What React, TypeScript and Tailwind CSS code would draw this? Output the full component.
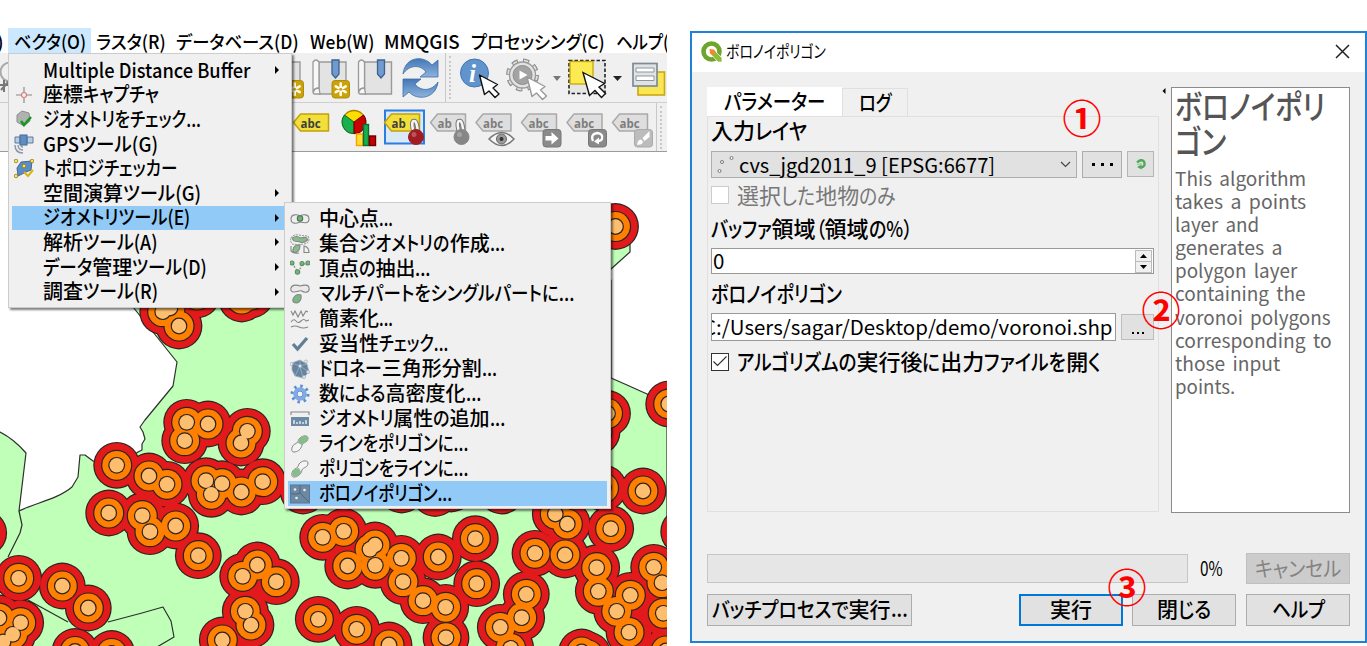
import { useLayoutEffect, useRef, type ReactNode } from "react";

const FONT = "font-['Noto_Sans_CJK_JP',sans-serif]";

/* Text set to a given width: kanji keep their full width, the rest is condensed. */
function Fit({ text, w, className = "" }: { text: string; w: number; className?: string }) {
  const ref = useRef<HTMLSpanElement>(null);
  const runs = text.match(/[\u4e00-\u9fff]+|[^\u4e00-\u9fff]+/g) ?? [];
  useLayoutEffect(() => {
    const host = ref.current;
    if (!host) return;
    const parts = Array.from(host.children) as HTMLElement[];
    const sizes = parts.map((p) => (p.firstElementChild as HTMLElement).offsetWidth);
    let fixed = 0;
    let loose = 0;
    parts.forEach((p, i) => {
      if (p.dataset.kanji === "1") fixed += sizes[i];
      else loose += sizes[i];
    });
    const s = loose > 0 ? (w - fixed) / loose : 1;
    parts.forEach((p, i) => {
      if (p.dataset.kanji === "1") return;
      p.style.width = `${sizes[i] * s}px`;
      (p.firstElementChild as HTMLElement).style.transform = `scaleX(${s})`;
    });
  }, [text, w]);
  return (
    <span ref={ref} className={`inline-flex shrink-0 whitespace-pre ${className}`}>
      {runs.map((r, i) => (
        <span key={i} data-kanji={/[\u4e00-\u9fff]/.test(r) ? "1" : "0"} className="inline-block">
          <span className="inline-block origin-left">{r}</span>
        </span>
      ))}
    </span>
  );
}

/* ---------- map ---------- */

const POINTS: [number, number][] = [
  [116.7, 465.3], [149, 476], [167, 484.3], [186.7, 422.3], [208, 424], [184.7, 440.7], [247.3, 431.3],
  [241, 443], [206, 480.7], [222, 483.7], [211.3, 494.3], [241.3, 492], [262.7, 481.7], [108.7, 513],
  [142.3, 515.7], [150, 531.7], [175.7, 526], [198.3, 555.7], [18.7, 578.3], [62.3, 586], [88.3, 608],
  [257.3, 565], [242.7, 576.3], [276.3, 581.7], [245.3, 611.3], [251, 625], [222.3, 640], [20.7, 622.7],
  [-1, 618], [12.7, 634.3], [3, 642], [75, 651.5], [111.7, 653.5], [-16.3, 533], [322.7, 537.3],
  [343.7, 531.3], [375, 545], [370, 549.3], [347.7, 566], [375.3, 565.3], [401.3, 558.3], [403, 581.7],
  [423, 600.7], [445.7, 607.3], [438.3, 557], [475.3, 538.7], [476.7, 583.7], [446, 637.7], [318.3, 619.3],
  [356.7, 629.3], [389, 645], [555.3, 514], [567.3, 524], [610.7, 528.7], [643, 491], [535, 553.3],
  [565, 555], [596.7, 567.7], [598.3, 591.3], [616.7, 611.3], [630.3, 595.3], [629, 632.3], [653.7, 567.3],
  [662, 582.7], [663.3, 613.3], [526.3, 594.3], [521.7, 617.7], [500.3, 627.3], [510.7, 648.3],
  [581.7, 652], [683.7, 531.7], [303, 491], [401.7, 490], [435, 493.5], [451, 489], [501.7, 491],
  [615.5, 226.5], [607.5, 413.5], [597, 432], [668.7, 404], [603.5, 488], [179, 326], [162.7, 311.7],
  [170, 308], [197, 295], [241.7, 299], [251, 295], [666, 651], [588, 655],
];

function Rings({ r, fill }: { r: number; fill: string }) {
  return (
    <>
      {POINTS.map(([x, y], i) => (
        <circle key={`o${i}`} cx={x} cy={y} r={r + 0.6} fill="#2b2320" />
      ))}
      {POINTS.map(([x, y], i) => (
        <circle key={`f${i}`} cx={x} cy={y} r={r - 0.6} fill={fill} />
      ))}
    </>
  );
}

function MapCanvas() {
  return (
    <svg width="667" height="494" viewBox="0 152 667 494" className="block shrink-0 bg-white">
      <g fill="#bfffb7" stroke="#2e2e2e" strokeWidth="1.2" strokeLinejoin="round">
        <path d="M0 432C10 437 20 446 26 453L19 511C35 503 58 499 72 487L78 477L80 455L85 455L93 461L116 468L138 452L142 450L142 444L145 439L143 432L140 427L145 420L173 386L177 362L133 307L133 280H611V378L627 385L647 394L667 404V680H-5V432Z" />
        <path d="M605 232L630 243V252L611 269L600 275Z" />
        <path fill="none" d="M19 511L22 525L20 533L8 557M28 600L68 622M108 622L142 613L163 607L171 621L174 637L157 647" />
      </g>
      <Rings r={22.8} fill="#e31a1c" />
      <Rings r={15} fill="#ff7f00" />
      <Rings r={7.8} fill="#fdbf6f" />
    </svg>
  );
}

/* ---------- toolbars ---------- */

/* One toolbar slot; its drawing uses window coordinates starting at (x, y). */
function Slot({ x, y, w, children }: { x: number; y: number; w: number; children?: ReactNode }) {
  return (
    <svg width={w} height="48" viewBox={`${x} ${y} ${w} 48`} className="block shrink-0">
      {children}
    </svg>
  );
}

function Book({ x, star, ribbon }: { x: number; star?: boolean; ribbon?: boolean }) {
  return (
    <g>
      <path d={`M${x + 7} 62H${x + 34}V94H${x + 7}Z`} fill="#e3e3e3" stroke="#9a9a9a" strokeWidth="1.4" />
      <path d={`M${x + 1} 62q3-4 6 0V88q-4-1-6 5ZM${x + 1} 92q1-4 6-4l1 6H${x + 3}q-2 0-2-2Z`} fill="#f7f7f7" stroke="#9a9a9a" strokeWidth="1.3" />
      {ribbon && <path d={`M${x + 20} 60h7v14l-3.500 4l-3.500-4Z`} fill="#6f9bcf" stroke="#3c628f" strokeWidth="1.3" />}
      {star && (
        <g>
          <rect x={x + 20} y="80.500" width="17.500" height="17.500" rx="3" fill="#c9a20d" stroke="#b28d00" />
          <g stroke="#fffbe8" strokeWidth="2.600" strokeLinecap="round">
            <path d={`M${x + 28.7} 83.500v11.500M${x + 23.700} 86.400l10 5.700M${x + 33.700} 86.400l-10 5.700`} />
          </g>
          <circle cx={x + 28.7} cy="89.200" r="1.500" fill="#c9a20d" />
        </g>
      )}
    </g>
  );
}

function Pointer({ x, y, faint }: { x: number; y: number; faint?: boolean }) {
  return (
    <path
      transform={`translate(${x} ${y})`}
      d="M0 0L5 19.500L9.500 16L15.500 22.500L19.500 19L13.500 13L18 9.500Z"
      fill="#fff"
      stroke={faint ? "#999" : "#111"}
      strokeWidth="1.400"
      strokeLinejoin="round"
    />
  );
}

function Tag({ x, y = 113, text = "abc", gold }: { x: number; y?: number; text?: string; gold?: boolean }) {
  return (
    <g>
      <path
        d={`M${x} ${y + 9.500}L${x + 7} ${y + 1}H${x + 35}V${y + 18}H${x + 7}Z`}
        fill={gold ? "#f3df3a" : "#dedede"}
        stroke={gold ? "#c3a00f" : "#a9a9a9"}
        strokeWidth="1.500"
        strokeLinejoin="round"
      />
      <text x={x + 7} y={y + 14.500} fontSize="11.500" fontWeight="700" fontFamily="Open Sans" fill={gold ? "#3f3f3f" : "#7d7d7d"}>
        {text}
      </text>
    </g>
  );
}

function Pin({ x, fill }: { x: number; fill: string }) {
  return (
    <g>
      <path d={`M${x - 3} 130q-2-9 1-9q3-1 4 13`} fill="none" stroke="#777" strokeWidth="4.500" strokeLinecap="round" />
      <path d={`M${x - 3} 130q-2-9 1-9q3-1 4 13`} fill="none" stroke="#f5f5f5" strokeWidth="2.500" strokeLinecap="round" />
      <circle cx={x} cy="137" r="7.500" fill={fill} stroke={fill} />
      <circle cx={x - 2} cy="134.500" r="2.500" fill="#fff" opacity=".25" />
    </g>
  );
}

function GreyBadge({ x, children }: { x: number; children: ReactNode }) {
  return (
    <g>
      <rect x={x} y="129.500" width="18" height="17.500" rx="3" fill="#8a8a8a" stroke="#777" />
      {children}
    </g>
  );
}

function Handle() {
  return (
    <div className="flex h-full w-[14px] shrink-0 items-center gap-[3px]">
      <div className="h-full w-px bg-[#c8c8c8]" />
      <div className="h-[43px] w-0 border-l-2 border-dotted border-[#c9c9c9]" />
    </div>
  );
}

function Toolbars() {
  return (
    <div className="flex h-[99px] shrink-0 flex-col overflow-hidden border-b border-[#9b9b9b] bg-[#f0f0f0]">
      <div className="flex h-[50px] shrink-0 border-b border-[#cfcfcf]">
        <Slot x={0} y={53} w={266}>
          <circle cx="10" cy="72" r="9.500" fill="none" stroke="#aaa" strokeWidth="2" />
          <path d="M0 85h8M4 80v12M1 90l8-9" stroke="#777" strokeWidth="2" />
        </Slot>
        <Slot x={266} y={53} w={44}>
          <Book x={266} star />
        </Slot>
        <Slot x={310} y={53} w={46}>
          <Book x={312} star ribbon />
        </Slot>
        <Slot x={356} y={53} w={42}>
          <Book x={357.500} ribbon />
        </Slot>
        <Slot x={398} y={53} w={47}>
          <defs>
            <linearGradient id="blue" x1="0" y1="0" x2="0" y2="1">
              <stop offset="0" stopColor="#4377b5" />
              <stop offset="1" stopColor="#8db3dd" />
            </linearGradient>
          </defs>
          <path d="M403 74C405 56 424 55 432 65L438 60V77H420L426 72C420 64 409 65 403 74Z" fill="url(#blue)" stroke="#3d6da7" strokeWidth=".8" />
          <path d="M438 82C436 99 417 101 409 92L403 97V79H421L415 84C421 92 432 91 438 82Z" fill="url(#blue)" stroke="#3d6da7" strokeWidth=".8" />
        </Slot>
        <Handle />
        <Slot x={459} y={53} w={45}>
          <circle cx="474.500" cy="73" r="14" fill="#6193cc" stroke="#4376b4" />
          <text x="469" y="82" fontSize="25" fontWeight="700" fontStyle="italic" fontFamily="Liberation Serif" fill="#fff">
            i
          </text>
          <Pointer x={479.500} y={75} />
        </Slot>
        <Slot x={504} y={53} w={48}>
          <circle cx="522.500" cy="75" r="14" fill="none" stroke="#8f8f8f" strokeWidth="5" strokeDasharray="6 5" />
          <circle cx="522.500" cy="75" r="14" fill="none" stroke="#e2e2e2" strokeWidth="2.600" strokeDasharray="4 7" strokeDashoffset="-1" />
          <circle cx="522.500" cy="75" r="13" fill="#e2e2e2" stroke="#9a9a9a" strokeWidth="1.300" />
          <circle cx="522.500" cy="75" r="9.500" fill="#a3a3a3" stroke="#8d8d8d" />
          <path d="M519.500 70.500l8 4.500l-8 4.500Z" fill="#fff" />
          <Pointer x={527} y={77} faint />
        </Slot>
        <Slot x={552} y={53} w={14}>
          <path d="M553 76h8l-4 5Z" fill="#777" />
        </Slot>
        <Slot x={566} y={53} w={46}>
          <rect x="569" y="60.500" width="36" height="33" fill="#e6e6e6" stroke="#222" strokeWidth="1.600" strokeDasharray="3.500 2" />
          <rect x="570" y="61.500" width="23" height="22.500" fill="#fcea52" stroke="#c9a600" strokeWidth="1.300" />
          <path transform="translate(583 72.500)" d="M0 0L6.500 23L12 18L18.500 25L22.500 21L16 14.500L21.500 11Z" fill="#fff" stroke="#111" strokeWidth="1.400" />
        </Slot>
        <Slot x={612} y={53} w={14}>
          <path d="M613 76h9l-4.500 5Z" fill="#222" />
        </Slot>
        <Slot x={626} y={53} w={41}>
          <rect x="638" y="72" width="26.500" height="23" fill="#f8e653" stroke="#c9a814" strokeWidth="1.600" />
          <rect x="633" y="63.500" width="24" height="22.500" fill="#dfe3e6" stroke="#7f8b94" strokeWidth="1.700" />
          <path d="M636 68h18v4h-18ZM636 76h18v4.500h-18Z" fill="#fff" stroke="#8b969e" />
        </Slot>
      </div>
      <div className="flex h-[48px] shrink-0">
        <Slot x={0} y={103} w={292} />
        <Slot x={292} y={103} w={46}>
          <Tag x={293.500} gold />
        </Slot>
        <Slot x={338} y={103} w={45}>
          <circle cx="354" cy="122" r="11.500" fill="#ffdd00" stroke="#a78300" strokeWidth="1.300" />
          <path d="M354 122L344.500 115A11.500 11.500 0 0 0 354 133.500Z" fill="#16b04c" stroke="#0e6630" />
          <path d="M354 122L363.500 115A11.500 11.500 0 0 1 354 133.500Z" fill="#c80000" stroke="#6e0000" />
          <rect x="356.500" y="134" width="6.500" height="11.500" fill="#ffe12d" stroke="#ff9a00" strokeWidth="1.400" />
          <rect x="363.500" y="124.500" width="5" height="21" fill="#16b04c" stroke="#0b6d33" strokeWidth="1.400" />
          <rect x="369.500" y="136" width="6" height="9.500" fill="#c80000" stroke="#6e0000" strokeWidth="1.400" />
        </Slot>
        <Slot x={383} y={103} w={44}>
          <rect x="385" y="110.500" width="39" height="33" fill="#d9e9f8" stroke="#2a7de1" strokeWidth="2" />
          <Tag x={384.500} text="ab" gold />
          <Pin x={416} fill="#a21d22" />
        </Slot>
        <Slot x={427} y={103} w={46}>
          <Tag x={430.500} text="ab" />
          <Pin x={461.500} fill="#868686" />
        </Slot>
        <Slot x={473} y={103} w={46}>
          <Tag x={476} />
          <path d="M489 139q13-13 25 0q-12 13-25 0Z" fill="#f5f5f5" stroke="#777" strokeWidth="1.500" />
          <circle cx="501.500" cy="139" r="5" fill="#9b9b9b" stroke="#666" />
          <circle cx="501.500" cy="139" r="2" fill="#333" />
        </Slot>
        <Slot x={519} y={103} w={45}>
          <Tag x={521.500} />
          <GreyBadge x={543}>
            <path d="M545.500 136h6v-4l7 6.500l-7 6v-4h-6Z" fill="#fff" />
          </GreyBadge>
        </Slot>
        <Slot x={564} y={103} w={45}>
          <Tag x={567} />
          <GreyBadge x={588.500}>
            <path d="M593 141q-3-7 4.500-8q6 1 4.500 6q-1 2-4 2" fill="none" stroke="#fff" strokeWidth="2.300" />
            <path d="M599 137.500v7l-5-3Z" fill="#fff" />
          </GreyBadge>
        </Slot>
        <Slot x={609} y={103} w={47}>
          <Tag x={612.500} />
          <rect x="634.500" y="129.500" width="18" height="17.500" rx="3" fill="#bcbcbc" stroke="#aaa" />
          <path d="M637 144.500q1-5 4-5l2 2q-1 4-6 3ZM642.500 138l7-7v6l-5 4Z" fill="#fff" />
        </Slot>
        <Handle />
      </div>
    </div>
  );
}

/* ---------- menus ---------- */

const BAR: [string, number, string][] = [
  ["ラスタ(R)", 70, "ml-[5px]"],
  ["データベース(D)", 123, "ml-[10px]"],
  ["Web(W)", 64, "ml-[11px]"],
  ["MMQGIS", 76, "ml-[10px]"],
  ["プロセッシング(C)", 134, "ml-[11px]"],
  ["ヘルプ(H)", 71, "ml-[11px]"],
];

function MenuBar() {
  return (
    <div className="flex h-[25px] shrink-0 items-center overflow-hidden bg-white text-[18.5px] leading-6 font-medium text-black">
      <span className="w-[8px] shrink-0 -translate-x-[3px]">)</span>
      <span className="flex h-[25px] w-[83px] shrink-0 items-center justify-center bg-[#cce8ff]">
        <Fit text="ベクタ(O)" w={72} />
      </span>
      {BAR.map(([t, w, m]) => (
        <Fit key={t} text={t} w={w} className={m} />
      ))}
    </div>
  );
}

const G = { fill: "none", stroke: "#858585", strokeWidth: 1.1 };
const icons: Record<string, ReactNode> = {
  cross: (
    <g {...G}>
      <path d="M2 10h5M13 10h5M10 2v5M10 13v5" />
      <circle cx="10" cy="10" r="2.500" stroke="#d77" />
    </g>
  ),
  check: (
    <>
      <path d="M3 6l5-4l7 2l1 8l-6 5l-7-4Z" fill="#aeb3b0" stroke="#8d8d8d" />
      <path d="M7 12l3 4l7-8" fill="none" stroke="#15971c" strokeWidth="2.500" />
    </>
  ),
  gps: (
    <>
      <path d="M1 3h5v6H1ZM13 3h6v6h-6Z" fill="#b6cde6" stroke="#5c7b9c" />
      <rect x="6" y="1" width="7" height="10" fill="#5d8dc4" stroke="#46688f" />
      <path d="M1 11q0 8 8 8M4 11q0 5 5 5M7 11q0 2 2 2" fill="none" stroke="#8797a7" strokeWidth="1.400" />
    </>
  ),
  topo: (
    <>
      <path d="M3 9l4-6l11-1l-1 9l-5 2l-8 4Z" fill="#5b8cc4" stroke="#46688f" />
      <path d="M10 13l4 4l5-6" fill="none" stroke="#d9b40f" strokeWidth="2" />
      <g fill="#ffe84a" stroke="#8f7a20" strokeWidth=".8">
        <circle cx="2" cy="2" r="1.800" />
        <circle cx="18" cy="2" r="1.800" />
        <circle cx="10" cy="7" r="1.800" />
        <circle cx="2" cy="17" r="1.800" />
      </g>
    </>
  ),
  centroid: (
    <g {...G}>
      <path d="M1 10c0-5 6-5 9-3c3-2 9-2 9 3c0 5-5 4-9 3c-4 2-9 2-9-3Z" fill="#eee" />
      <circle cx="10" cy="9.500" r="2.700" fill="#74b07c" stroke="#47764e" />
    </g>
  ),
  collect: (
    <g {...G}>
      <path d="M1 4q2-4 8-3t9 1q3 7-4 8t-12 0q-2-3-1-6Z" strokeDasharray="2 1" strokeWidth=".9" />
      <path d="M2.500 4q4-3 8 0q7-2 7 2q-4 4-9 1.500q-6 .5-6-3.500Z" fill="#86bd8a" />
      <path d="M3 15.500q1-5 7-4.500q0 6-4 7.500q-4 0-3-3Z" fill="#86bd8a" />
      <path d="M14 12q5 1 5 6.500h-5ZM1 12v5q3 3 8 2" />
    </g>
  ),
  vertices: (
    <g {...G}>
      <path d="M2 4l6 9l5-8h5" strokeDasharray="2 1.500" />
      <g fill="#78b481" stroke="#5a8f62">
        <circle cx="2" cy="4" r="2" />
        <circle cx="12" cy="4.500" r="2" />
        <circle cx="18" cy="4" r="2" />
        <circle cx="7.500" cy="13" r="2.200" />
      </g>
    </g>
  ),
  single: (
    <g {...G}>
      <path d="M1 4C2 0 8 1 10 2C13 1 19 0 19 4C20 9 14 9 12 7C9 6 8 8 4 8C1 8 .5 6 1 4Z" fill="#e9e9e9" />
      <path d="M3 15q3-6 8-4q1 6-4 8q-5 0-4-4Z" fill="#79b880" />
    </g>
  ),
  simplify: (
    <g {...G}>
      <path d="M1 2l2 4l2-4l3 6l3-6l2 5l3-5l2 1M1 13q3-4 5-1t5 0t5 0l3-1M1 18q4-2 8 0t9 0" />
    </g>
  ),
  valid: <path d="M3 10l4.500 5L17 4" fill="none" stroke="#5f7f99" strokeWidth="3.300" />,
  delaunay: (
    <g fill="#66849f" stroke="#9eb0bf" strokeWidth=".8">
      <path d="M2 4l8-3l7 4l2 8l-6 6l-8-2l-3-6ZM10 7L2 4M10 7l7-2M10 7l9 6M10 7l3 12M10 7l-5 10M10 7V1" />
      <circle cx="10" cy="7" r="1.500" fill="#eee" />
      <circle cx="1.500" cy="5" r="1.500" fill="#eee" />
      <circle cx="18" cy="13" r="1.500" fill="#eee" />
      <circle cx="14" cy="18" r="1.500" fill="#eee" />
      <circle cx="16" cy="2.500" r="1.500" fill="#eee" />
    </g>
  ),
  gear: (
    <g fill="none" stroke="#5b8dd2">
      <circle cx="10" cy="10" r="5" strokeWidth="3.500" stroke="#7eabe3" />
      <circle cx="10" cy="10" r="8" strokeWidth="3" strokeDasharray="2.500 3.780" />
      <circle cx="10" cy="10" r="3" strokeWidth="1" />
    </g>
  ),
  ruler: (
    <>
      <path d="M1 6V3h18v3" {...G} />
      <rect x="1" y="8" width="18" height="9" fill="#6d8aa5" />
      <path d="M4 15v-4M7 15v-2M10 15v-3M13 15v-2M16 15v-4" stroke="#fff" strokeWidth="1.200" />
    </>
  ),
  toPoly: (
    <>
      <path d="M9 5C12 1 18 1 18 4C18 9 13 8 12 11C11 16 7 18 4 18C0 18 2 11 5 10C8 9 8 7 9 5Z" fill="#f4f4f4" stroke="#858585" />
      <path d="M9 5C12 1 18 1 18 4C18 9 13 8 12 11L8 9Z" fill="#87bd8b" />
    </>
  ),
  toLine: (
    <>
      <path d="M9 5C12 1 18 1 18 4C18 9 13 8 12 11C11 16 7 18 4 18C0 18 2 11 5 10C8 9 8 7 9 5Z" fill="#f4f4f4" stroke="#858585" />
      <path d="M5 10L9 9L11 13C10 16 7 17.500 4 17.500C1 17 2 11 5 10Z" fill="#87bd8b" />
    </>
  ),
  voronoi: (
    <>
      <rect x="0.500" y="1" width="19" height="18" fill="#6b89a3" stroke="#5c7791" />
      <path d="M10 1v8l9 9M1 9.500q5 2 9-.5" stroke="#4e687e" fill="none" />
      <g fill="#eee">
        <circle cx="5" cy="5.500" r="1.300" />
        <circle cx="14.500" cy="6" r="1.300" />
        <circle cx="6.500" cy="14" r="1.300" />
      </g>
    </>
  ),
};

type Item = { text: string; w: number; icon?: string; arrow?: boolean; on?: boolean };

const MAIN: Item[] = [
  { text: "Multiple Distance Buffer", w: 208, arrow: true },
  { text: "座標キャプチャ", w: 116, icon: "cross" },
  { text: "ジオメトリをチェック...", w: 158, icon: "check" },
  { text: "GPSツール(G)", w: 115, icon: "gps" },
  { text: "トポロジチェッカー", w: 134, icon: "topo" },
  { text: "空間演算ツール(G)", w: 158, arrow: true },
  { text: "ジオメトリツール(E)", w: 147, arrow: true, on: true },
  { text: "解析ツール(A)", w: 115, arrow: true },
  { text: "データ管理ツール(D)", w: 164, arrow: true },
  { text: "調査ツール(R)", w: 115, arrow: true },
];

const SUB: Item[] = [
  { text: "中心点...", w: 74, icon: "centroid" },
  { text: "集合ジオメトリの作成...", w: 186, icon: "collect" },
  { text: "頂点の抽出...", w: 112, icon: "vertices" },
  { text: "マルチパートをシングルパートに...", w: 255, icon: "single" },
  { text: "簡素化...", w: 74, icon: "simplify" },
  { text: "妥当性チェック...", w: 129, icon: "valid" },
  { text: "ドロネー三角形分割...", w: 178, icon: "delaunay" },
  { text: "数による高密度化...", w: 162, icon: "gear" },
  { text: "ジオメトリ属性の追加...", w: 186, icon: "ruler" },
  { text: "ラインをポリゴンに...", w: 149, icon: "toPoly" },
  { text: "ポリゴンをラインに...", w: 149, icon: "toLine" },
  { text: "ボロノイポリゴン...", w: 133, icon: "voronoi", on: true },
];

function MenuRow({ item, h, lift }: { item: Item; h: string; lift: string }) {
  return (
    <div className={`flex shrink-0 items-center text-[20px] leading-6 font-medium ${h} ${item.on ? "bg-[#91c9f7]" : ""}`}>
      <span className="flex w-[31px] shrink-0 items-center pl-[2px]">
        {item.icon && (
          <svg width="20" height="20" viewBox="0 0 20 20">
            {icons[item.icon]}
          </svg>
        )}
      </span>
      <Fit text={item.text} w={item.w} className={lift} />
      {item.arrow && (
        <svg width="6" height="8" viewBox="0 0 6 8" className="mr-[8px] ml-auto">
          <path d="M1 0l4 4l-4 4Z" fill="#000" />
        </svg>
      )}
    </div>
  );
}

/* ---------- dialog ---------- */

function Button({ text, w, className }: { text: string; w: number; className: string }) {
  return (
    <button className={`flex shrink-0 items-center justify-center border pb-[3px] text-[21px] leading-7 ${className}`}>
      <Fit text={text} w={w} />
    </button>
  );
}

const HELP: [string, number][] = [
  ["This algorithm", 131],
  ["takes a points", 131],
  ["layer and", 84],
  ["generates a", 108],
  ["polygon layer", 122],
  ["containing the", 131],
  ["voronoi polygons", 156],
  ["corresponding to", 157],
  ["those input", 105],
  ["points.", 60],
];

function Marker({ n, className }: { n: string; className: string }) {
  return (
    <span className={`absolute flex h-[40px] w-[40px] items-center justify-center text-[39px] leading-none font-bold text-[#ff0000] ${className}`}>
      {n}
    </span>
  );
}

function Dialog() {
  return (
    <section className="mt-[31px] ml-[23px] flex h-[612px] w-[677px] shrink-0 flex-col border-2 border-[#1d82d8] bg-[#f0f0f0] text-black">
      <header className="flex h-[39px] shrink-0 items-center bg-white pl-[9px]">
        <svg width="22" height="22" viewBox="0 0 22 22" className="-mt-[2px] shrink-0">
          <circle cx="10.500" cy="10.500" r="8" fill="none" stroke="#6fa52c" strokeWidth="4.600" />
          <path d="M11 11l3.500-.5L21 17v4h-4l-6-6.500Z" fill="#8dbb3c" stroke="#fff" strokeWidth=".7" />
          <path d="M8.500 8l4.500.5l2 2.500l-3.500 3.500L9 12.500Z" fill="#f08b2c" />
        </svg>
        <Fit text="ボロノイポリゴン" w={100} className="-mt-[3px] ml-[3px] text-[17px]" />
        <svg width="15" height="15" viewBox="0 0 15 15" className="-mt-[2px] mr-[15px] ml-auto">
          <path d="M1 1l13 13M14 1L1 14" stroke="#222" strokeWidth="1.500" />
        </svg>
      </header>
      <div className="flex h-[440px] shrink-0 pt-[15px] pl-[15px] font-medium">
        <div className="flex w-[452px] shrink-0 flex-col">
          <div className="flex h-[29px] shrink-0 items-end">
            <div className="flex h-[29px] w-[135px] items-center justify-center bg-white pb-[3px] text-[21px] leading-7">
              <Fit text="パラメーター" w={101} />
            </div>
            <div className="flex h-[28px] w-[66px] items-center justify-center border border-b-0 border-[#e0e0e0] pb-[3px] text-[21px] leading-7">
              <Fit text="ログ" w={33} />
            </div>
          </div>
          <div className="flex h-[396px] flex-col border border-[#e0e0e0] pr-[3px] pl-[3px] text-[22px] leading-[30px]">
            <div className="flex h-[34px] items-start">
              <Fit text="入力レイヤ" w={96} className="-mt-[3px]" />
            </div>
            <div className="flex h-[27px] shrink-0">
              <div className="flex h-[27px] w-[366px] items-center border border-[#adadad] bg-[#e1e1e1] pr-[5px] pl-[5px]">
                <svg width="18" height="22" viewBox="0 0 18 22" className="shrink-0">
                  <g fill="#fff" stroke="#777">
                    <circle cx="5" cy="8" r="1.500" />
                    <circle cx="14.500" cy="4" r="1.500" />
                    <circle cx="2.500" cy="17" r="1.500" />
                  </g>
                </svg>
                <Fit text="cvs_jgd2011_9 [EPSG:6677]" w={256} className="-mt-[2px] ml-[4px] text-[20.5px] font-normal" />
                <svg width="11" height="7" viewBox="0 0 11 7" className="ml-auto">
                  <path d="M1 1l4.500 4.500L10 1" fill="none" stroke="#444" strokeWidth="1.200" />
                </svg>
              </div>
              <button className="ml-[5px] flex h-[27px] w-[40px] items-center justify-center gap-[6px] border border-[#adadad] bg-[#e1e1e1]">
                <i className="h-[3px] w-[3px] bg-black" />
                <i className="h-[3px] w-[3px] bg-black" />
                <i className="h-[3px] w-[3px] bg-black" />
              </button>
              <button className="ml-[5px] flex h-[26px] w-[27px] items-center justify-center border border-[#b5b5b5] bg-[#e1e1e1]">
                <svg width="10" height="11" viewBox="0 0 10 11">
                  <path d="M1 3.500q4-4 7-1q2 5-3 6" fill="none" stroke="#4eaa58" strokeWidth="2.400" />
                  <path d="M5.500 5.500v5L1 8Z" fill="#4eaa58" />
                  <path d="M1 5.500q3-1 5-.5" fill="none" stroke="#7ec685" />
                </svg>
              </button>
            </div>
            <div className="flex h-[34px] shrink-0 items-center font-normal text-[#787878]">
              <span className="h-[18px] w-[18px] shrink-0 border border-[#ccc] bg-white" />
              <Fit text="選択した地物のみ" w={159} className="-mt-[3px] ml-[8px]" />
            </div>
            <div className="flex h-[36px] shrink-0 items-center">
              <Fit text="バッファ領域（領域の%）" w={201} className="-mt-[6px]" />
            </div>
            <div className="flex h-[26px] w-[443px] shrink-0 items-center border border-[#999] bg-white pl-px">
              <Fit text="0" w={11} className="-mt-[3px] text-[20.5px] font-normal" />
              <div className="mr-px ml-auto flex h-[23px] w-[17px] flex-col border border-[#bbb] bg-[#f0f0f0]">
                <span className="flex h-[11px] items-center justify-center border-b border-[#bbb]">
                  <svg width="7" height="4" viewBox="0 0 7 4"><path d="M0 4L3.500 0L7 4Z" /></svg>
                </span>
                <span className="flex h-[10px] items-center justify-center">
                  <svg width="7" height="4" viewBox="0 0 7 4"><path d="M0 0h7L3.500 4Z" /></svg>
                </span>
              </div>
            </div>
            <div className="flex h-[39px] shrink-0 items-center">
              <Fit text="ボロノイポリゴン" w={131} className="-mt-[4px]" />
            </div>
            <div className="flex h-[28px] shrink-0 items-center">
              <div className="flex h-[28px] w-[405px] shrink-0 items-center justify-end overflow-hidden border border-[#999] bg-white pr-[2px] text-[20px] font-normal">
                <Fit text="C:/Users/sagar/Desktop/demo/voronoi.shp" w={410} className="-mt-px" />
              </div>
              <button className="ml-[5px] flex h-[26px] w-[33px] items-end justify-center gap-[3px] border border-[#bdbdbd] bg-[#e1e1e1] pb-[5px]">
                <i className="h-[2px] w-[2px] bg-black" />
                <i className="h-[2px] w-[2px] bg-black" />
                <i className="h-[2px] w-[2px] bg-black" />
              </button>
            </div>
            <div className="flex h-[41px] shrink-0 items-center">
              <span className="flex h-[18px] w-[18px] shrink-0 items-center justify-center border border-[#333] bg-white">
                <svg width="14" height="11" viewBox="0 0 14 11">
                  <path d="M.5 5.500l4 4L13.500.5" fill="none" stroke="#333" strokeWidth="1.200" />
                </svg>
              </span>
              <Fit text="アルゴリズムの実行後に出力ファイルを開く" w={364} className="-mt-[3px] ml-[8px]" />
            </div>
          </div>
        </div>
        <svg width="4" height="6" viewBox="0 0 4 6" className="mt-px ml-[3px] shrink-0">
          <path d="M3.500 0v6L.5 3Z" />
        </svg>
        <aside className="ml-[5px] flex h-[426px] w-[179px] shrink-0 flex-col border border-[#8c8c8c] bg-white pl-[3px]">
          <h1 className="flex h-[78px] shrink-0 flex-col text-[33px] leading-[35px] font-medium text-[#555]">
            <Fit text="ボロノイポリ" w={150} />
            <Fit text="ゴン" w={51} />
          </h1>
          <div className="flex flex-col text-[19px] leading-[23.1px] font-normal [word-spacing:3px] text-[#666]">
            {HELP.map(([t, w]) => (
              <Fit key={t} text={t} w={w} />
            ))}
          </div>
        </aside>
      </div>
      <div className="mt-[41px] flex h-[31px] shrink-0 items-center pl-[15px]">
        <div className="h-[29px] w-[481px] shrink-0 border border-[#c6c6c6] bg-[#e6e6e6]" />
        <Fit text="0%" w={23} className="-mt-[2px] ml-[12px] text-[20px]" />
        <Button text="キャンセル" w={86} className="mr-[15px] ml-auto h-[31px] w-[104px] border-[#bfbfbf] bg-[#ccc] text-[#838383]" />
      </div>
      <div className="mt-[9px] flex h-[33px] shrink-0 items-center pl-[15px] font-medium">
        <Button text="バッチプロセスで実行..." w={196} className="h-[32px] w-[205px] border-[#adadad] bg-[#e1e1e1]" />
        <Button text="実行" w={42} className="ml-[107px] h-[32px] w-[104px] border-2 border-[#0078d7] bg-[#e1e1e1]" />
        <Button text="閉じる" w={54} className="ml-[9px] h-[32px] w-[104px] border-[#adadad] bg-[#e1e1e1]" />
        <Button text="ヘルプ" w={53} className="ml-[10px] h-[32px] w-[104px] border-[#adadad] bg-[#e1e1e1]" />
      </div>
    </section>
  );
}

export default function App() {
  return (
    <main className={`relative flex h-[646px] w-[1367px] overflow-hidden bg-white ${FONT} [font-feature-settings:'palt']`}>
      <div className="flex h-[646px] w-[667px] shrink-0 flex-col overflow-hidden pt-[28px]">
        <MenuBar />
        <Toolbars />
        <MapCanvas />
      </div>
      <Dialog />
      <nav className="absolute top-[53px] left-[8px] flex h-[255px] w-[284px] flex-col border border-[#ccc] bg-[#f0f0f0] px-[3px] pt-[4px] shadow-[2px_2px_2px_rgba(0,0,0,0.5)]">
        {MAIN.map((m) => (
          <MenuRow key={m.text} item={m} h="h-[24.6px]" lift="-mt-px" />
        ))}
      </nav>
      <nav className="absolute top-[202px] left-[284px] flex h-[307px] w-[327px] flex-col border border-[#ccc] bg-[#f0f0f0] px-[3px] pt-[3px] shadow-[2px_2px_2px_rgba(0,0,0,0.5)]">
        {SUB.map((m) => (
          <MenuRow key={m.text} item={m} h="h-[25px]" lift="-mt-px" />
        ))}
      </nav>
      <Marker n="①" className="top-[96px] left-[1062px]" />
      <Marker n="②" className="top-[288px] left-[1141px]" />
      <Marker n="③" className="top-[565px] left-[1107px]" />
    </main>
  );
}
